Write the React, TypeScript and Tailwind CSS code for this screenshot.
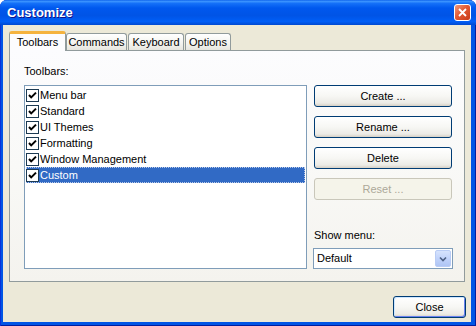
import React from 'react';

const toolbars = ['Menu bar', 'Standard', 'UI Themes', 'Formatting', 'Window Management', 'Custom'];

function Check() {
  return (
    <svg width="13" height="13" viewBox="0 0 13 13" className="shrink-0">
      <rect x="0.5" y="0.5" width="12" height="12" fill="#fff" stroke="#1C3A52" />
      <path d="M3 6 L5.2 8.4 L10 3.6" fill="none" stroke="#000" strokeWidth="2" />
    </svg>
  );
}

function XpButton({ label, disabled }: { label: string; disabled?: boolean }) {
  return (
    <div
      className={
        disabled
          ? 'flex h-[22px] w-[138px] items-center justify-center rounded-[3px] border border-[#C9C7BA] bg-[#F5F4EA] text-[#ACA899]'
          : 'flex h-[22px] w-[138px] items-center justify-center rounded-[3px] border border-[#003C74] bg-[linear-gradient(180deg,#FFFFFF_0%,#F7F7F4_50%,#ECEBE6_85%,#D6D0C5_100%)]'
      }
    >
      {label}
    </div>
  );
}

export default function App() {
  return (
    <div className="flex h-[326px] w-[476px] flex-col overflow-hidden rounded-t-[7px] bg-[#0055E5] font-['Liberation_Sans',Arial,sans-serif] text-[11px] leading-[13px] text-black shadow-[inset_1px_0_0_#0831D9,inset_-1px_0_0_#001EA0,inset_0_-1px_0_#001EA0]">
      {/* title bar */}
      <div className="flex h-[25px] shrink-0 items-center justify-between bg-[linear-gradient(180deg,#0A5FEA_0%,#3D95FF_5%,#1470F8_14%,#0058EE_32%,#0054E6_62%,#005EF6_86%,#0049D0_100%)] pl-[7px] pr-[5px]">
        <span className="text-[13px] font-bold text-white [text-shadow:1px_1px_0_#0F1089]">Customize</span>
        <div className="flex h-[17px] w-[17px] items-center justify-center rounded-[3px] border border-white bg-[linear-gradient(135deg,#F09A7E_0%,#E25A34_45%,#C93A17_100%)]">
          <svg width="9" height="9" viewBox="0 0 9 9">
            <path d="M1 1 L8 8 M8 1 L1 8" stroke="#fff" strokeWidth="1.8" />
          </svg>
        </div>
      </div>

      {/* body */}
      <div className="mb-[4px] ml-[3px] mr-[5px] flex flex-1 flex-col bg-[#ECE9D8] pt-[6px]">
        {/* tabs */}
        <div className="relative z-10 -mb-px ml-[6px] flex h-[20px] items-end">
          <div className="flex h-[20px] w-[57px] items-center justify-center rounded-t-[3px] border-x border-t-[3px] border-x-[#919B9C] border-t-[#F5B33E] bg-[#FCFCFE] pb-[1px]">
            Toolbars
          </div>
          <div className="mb-px flex h-[17px] w-[61px] items-center justify-center rounded-t-[3px] border-x border-t border-[#919B9C] bg-[linear-gradient(180deg,#FFFFFF_0%,#F3F3EF_60%,#E6E5DE_100%)] pt-[1px]">
            Commands
          </div>
          <div className="mb-px ml-px flex h-[17px] w-[56px] items-center justify-center rounded-t-[3px] border-x border-t border-[#919B9C] bg-[linear-gradient(180deg,#FFFFFF_0%,#F3F3EF_60%,#E6E5DE_100%)] pt-[1px]">
            Keyboard
          </div>
          <div className="mb-px ml-px flex h-[17px] w-[46px] items-center justify-center rounded-t-[3px] border-x border-t border-[#919B9C] bg-[linear-gradient(180deg,#FFFFFF_0%,#F3F3EF_60%,#E6E5DE_100%)] pt-[1px]">
            Options
          </div>
        </div>

        {/* panel */}
        <div className="mx-[6px] flex h-[232px] gap-[6px] border border-[#919B9C] bg-[linear-gradient(180deg,#FCFCFE_0%,#F9F9F7_50%,#F4F3EE_100%)] pb-[12px] pl-[14px] pr-[11px] pt-[14px]">
          <div className="flex w-[283px] flex-col">
            <div className="mb-[7px] h-[13px]">Toolbars:</div>
            <div className="flex-1 border border-[#7F9DB9] bg-white p-px">
              {toolbars.map((t) => {
                const sel = t === 'Custom';
                return (
                  <div
                    key={t}
                    className={
                      sel
                        ? 'flex h-[16px] items-center border border-dotted border-[#B9C9E6] bg-[#316AC5] text-white'
                        : 'flex h-[16px] items-center border border-transparent'
                    }
                  >
                    <div className="-ml-px">
                      <Check />
                    </div>
                    <span className="ml-px">{t}</span>
                  </div>
                );
              })}
            </div>
          </div>

          <div className="flex w-[140px] flex-col justify-between pt-[20px]">
            <div className="ml-px flex flex-col gap-[9px]">
              <XpButton label="Create ..." />
              <XpButton label="Rename ..." />
              <XpButton label="Delete" />
              <XpButton label="Reset ..." disabled />
            </div>
            <div className="flex flex-col">
              <div className="mb-[6px] ml-px">Show menu:</div>
              <div className="flex h-[21px] items-center border border-[#7F9DB9] bg-white pl-[3px] pr-px">
                <span>Default</span>
                <div className="ml-auto flex h-[17px] w-[16px] items-center justify-center rounded-[2px] border border-[#B9CCF5] bg-[linear-gradient(180deg,#D6E3FD_0%,#C1D3FB_50%,#AFC5F4_100%)]">
                  <svg width="8" height="6" viewBox="0 0 8 6">
                    <path d="M1 1.5 L4 4.5 L7 1.5" fill="none" stroke="#4D6185" strokeWidth="1.6" />
                  </svg>
                </div>
              </div>
            </div>
          </div>
        </div>

        {/* footer */}
        <div className="mr-[5px] mt-[14px] flex justify-end">
          <div className="flex h-[22px] w-[73px] items-center justify-center rounded-[3px] border border-[#003C74] bg-[linear-gradient(180deg,#FFFFFF_0%,#F7F7F4_50%,#ECEBE6_85%,#D6D0C5_100%)] shadow-[inset_1px_1px_0_#CEE7FF,inset_-1px_-1px_0_#6982EE]">
            Close
          </div>
        </div>
      </div>
    </div>
  );
}
